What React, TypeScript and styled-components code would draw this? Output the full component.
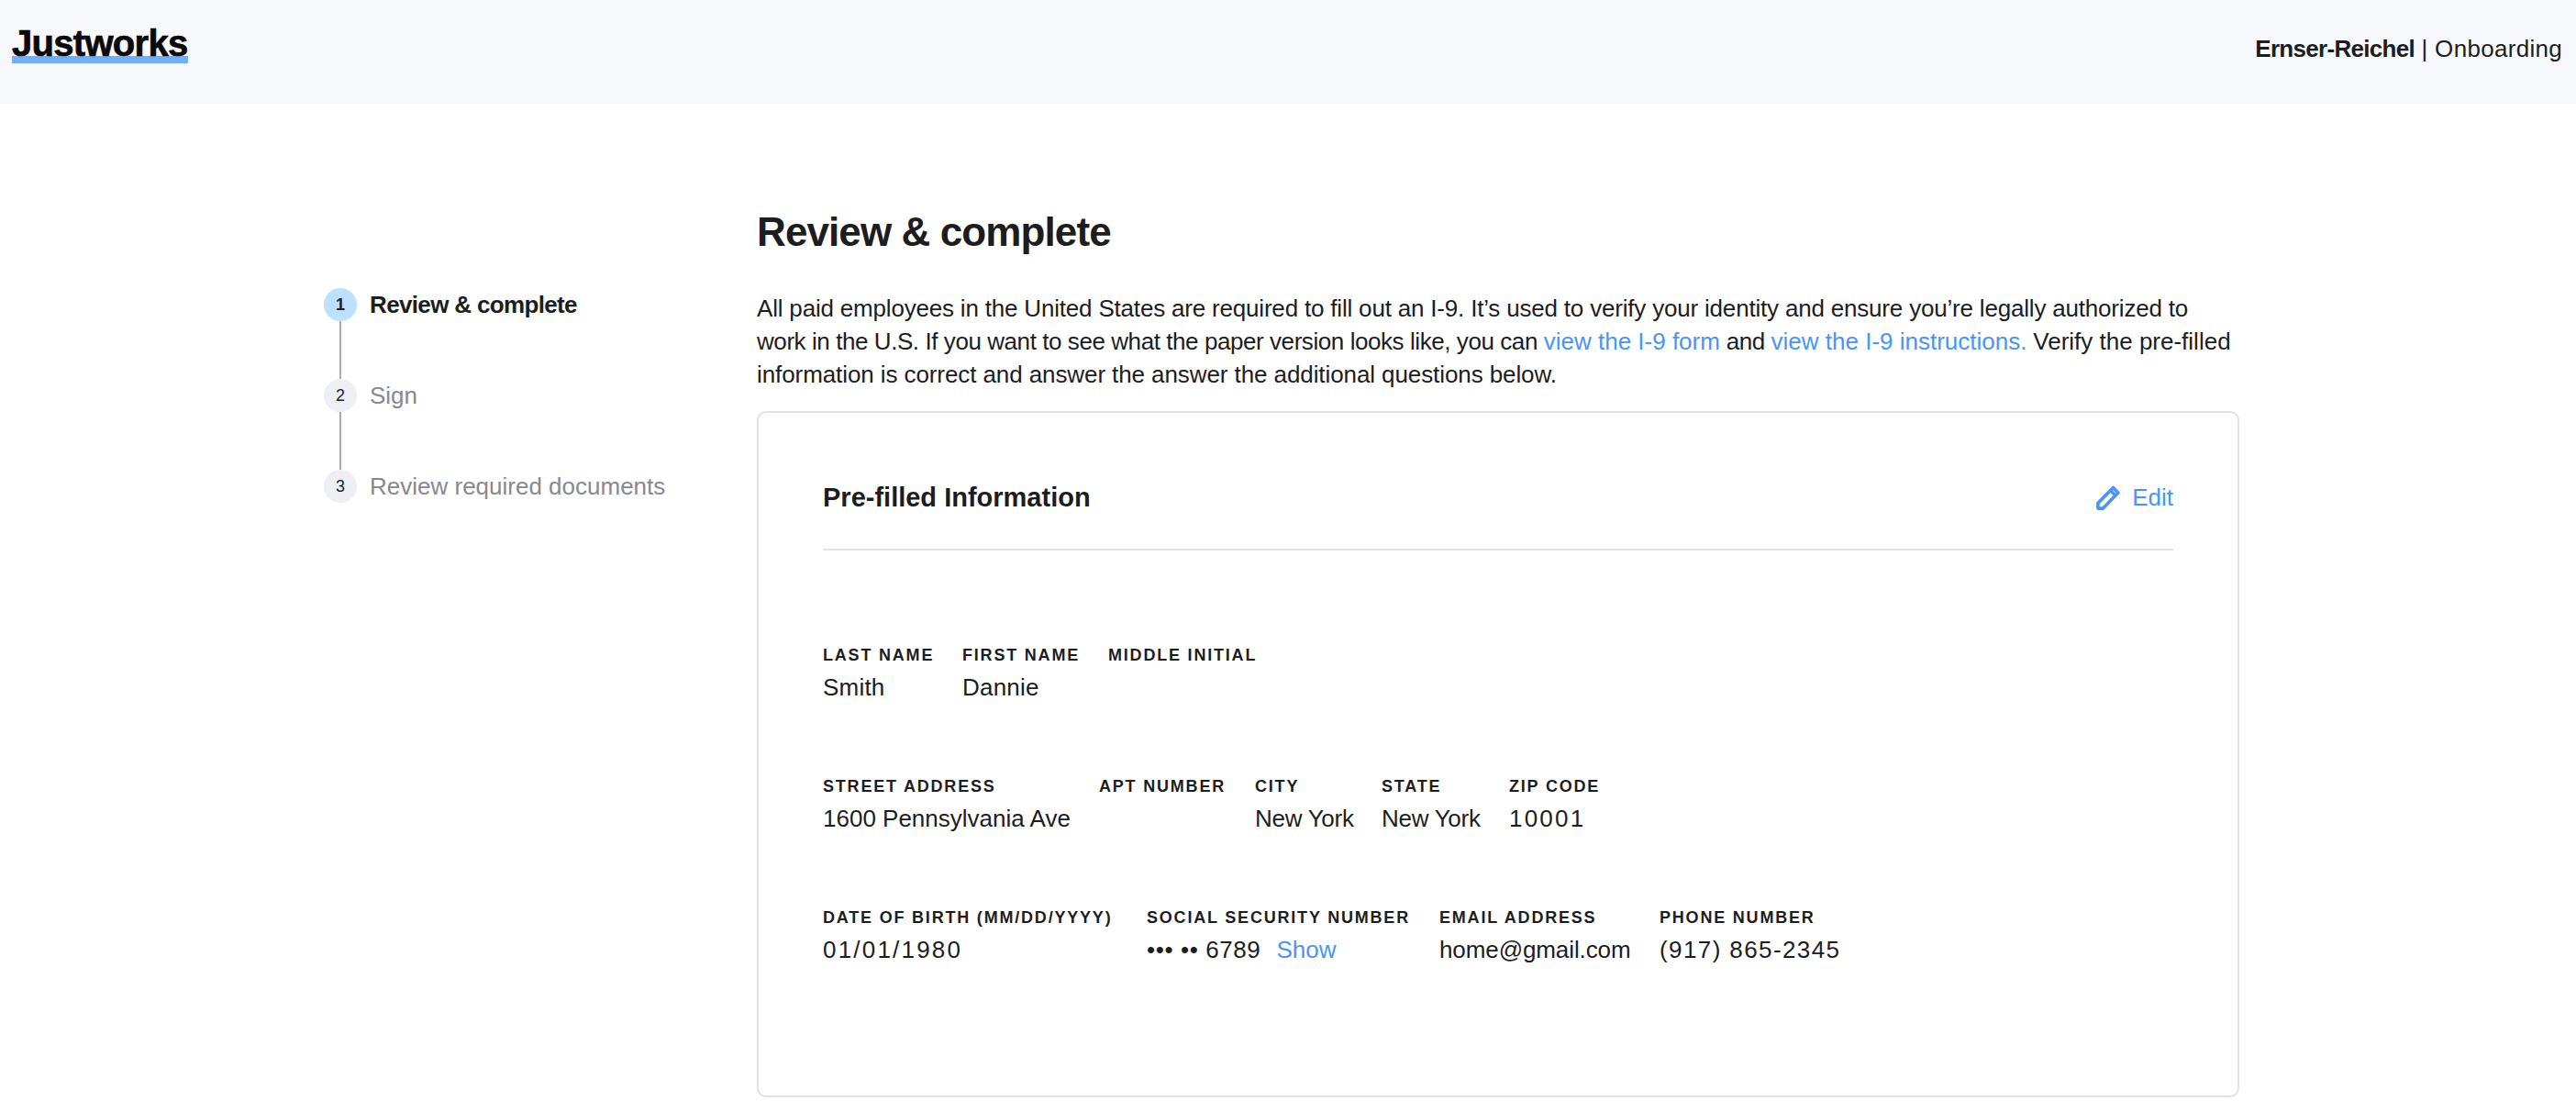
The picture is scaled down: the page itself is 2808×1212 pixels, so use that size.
import React from "react";
import { createGlobalStyle, styled } from "styled-components";

const GlobalStyle = createGlobalStyle`
  html, body {
    margin: 0;
    padding: 0;
    background: #fff;
    color: #1c1d1f;
    font-family: "Liberation Sans", Arial, sans-serif;
  }
`;

const Page = styled.div`
  width: 2808px;
  height: 1212px;
  overflow: hidden;
`;

const Header = styled.header`
  height: 113px;
  padding: 0 15px 6px 13px;
  box-sizing: border-box;
  background: #f7f8fc;
  display: flex;
  justify-content: space-between;
  align-items: center;
`;

const Logo = styled.div`
  height: 32px;
  margin-bottom: 9px;
  font-size: 40px;
  line-height: 36px;
  font-weight: 700;
  letter-spacing: -0.7px;
  color: #0a0a0a;
  -webkit-text-stroke: 0.7px #0a0a0a;
  border-bottom: 8px solid #6eb0ff;
`;

const Account = styled.div`
  font-size: 26px;
  letter-spacing: 0.3px;
  color: #1c1d1f;
`;

const Strong = styled.strong`
  font-weight: 700;
  letter-spacing: -0.7px;
`;

const Body = styled.div`
  display: flex;
  padding: 113px 0 0 353px;
`;

const Steps = styled.ol`
  list-style: none;
  margin: 88px 0 0;
  padding: 0;
  width: 472px;
`;

const Step = styled.li<{ $last?: boolean }>`
  display: flex;
  align-items: flex-start;
  gap: 14px;
  height: ${(p) => (p.$last ? "36px" : "99px")};
`;

const Marker = styled.div`
  display: flex;
  flex-direction: column;
  align-items: center;
  height: 100%;
`;

const Circle = styled.div<{ $active?: boolean }>`
  width: 36px;
  height: 36px;
  flex: none;
  border-radius: 50%;
  display: flex;
  justify-content: center;
  align-items: center;
  font-size: 18px;
  font-weight: ${(p) => (p.$active ? 700 : 400)};
  color: #1c1d1f;
  background: ${(p) => (p.$active ? "#bde0ff" : "#eeeff4")};
`;

const Connector = styled.div`
  flex: 1;
  width: 2px;
  background: #a9abb8;
`;

const StepLabel = styled.span<{ $active?: boolean }>`
  font-size: 26px;
  line-height: 36px;
  font-weight: ${(p) => (p.$active ? 700 : 400)};
  letter-spacing: ${(p) => (p.$active ? "-0.65px" : "0")};
  color: ${(p) => (p.$active ? "#1c1d1f" : "#868892")};
`;

const Main = styled.main`
  width: 1616px;
`;

const Title = styled.h1`
  margin: 0 0 38px;
  font-size: 44px;
  line-height: 54px;
  font-weight: 700;
  letter-spacing: -0.9px;
  color: #1c1d1f;
`;

const Intro = styled.div`
  margin: 0 0 22px;
  font-size: 26px;
  line-height: 36px;
  white-space: nowrap;
`;

const IntroLine = styled.p<{ $tracking: number }>`
  margin: 0;
  letter-spacing: ${(p) => p.$tracking}px;
`;

const IntroTail = styled.span`
  letter-spacing: 0;
`;

const TextLink = styled.a`
  color: #4a94f8;
  letter-spacing: 0;
  text-decoration: none;
`;

const Card = styled.section`
  box-sizing: border-box;
  height: 748px;
  padding: 0 70px;
  border: 2px solid #e2e2e6;
  border-radius: 10px;
`;

const CardHead = styled.div`
  box-sizing: border-box;
  height: 150px;
  padding-top: 37px;
  display: flex;
  justify-content: space-between;
  align-items: center;
  border-bottom: 2px solid #e2e2e6;
`;

const CardTitle = styled.h2`
  margin: 0;
  font-size: 29px;
  font-weight: 700;
`;

const EditLink = styled(TextLink)`
  display: flex;
  align-items: center;
  gap: 13px;
  font-size: 26px;
`;

const Rows = styled.div`
  padding-top: 100px;
  display: flex;
  flex-direction: column;
  gap: 71px;
`;

const Row = styled.div<{ $columns: string }>`
  display: grid;
  grid-template-columns: ${(p) => p.$columns};
`;

const Field = styled.div`
  height: 72px;
`;

const FieldLabel = styled.div`
  font-size: 18px;
  line-height: 28px;
  font-weight: 700;
  letter-spacing: 1.8px;
  text-transform: uppercase;
  white-space: nowrap;
  color: #1c1d1f;
`;

const FieldValue = styled.div<{ $tracking?: number }>`
  font-size: 26px;
  line-height: 42px;
  letter-spacing: ${(p) => p.$tracking ?? 0.2}px;
  white-space: nowrap;
`;

const ShowLink = styled(TextLink)`
  margin-left: 17px;
`;

const PencilIcon = () => (
  <svg width="26" height="27" viewBox="0 0 26 27" fill="none" stroke="#4a94f8" strokeWidth="3.6" strokeLinejoin="round">
    <path d="M1.9 25.1V19.5L18.5 2.4l5.4 5.6L7.5 25.1z" />
    <path d="M15.5 5.5l5.6 5.8" />
  </svg>
);

type FieldData = { label: string; value?: string; tracking?: number; masked?: boolean };

const rows: { columns: string; fields: FieldData[] }[] = [
  {
    columns: "152px 159px auto",
    fields: [
      { label: "Last name", value: "Smith" },
      { label: "First name", value: "Dannie" },
      { label: "Middle initial" },
    ],
  },
  {
    columns: "301px 170px 138px 139px auto",
    fields: [
      { label: "Street address", value: "1600 Pennsylvania Ave", tracking: 0 },
      { label: "Apt number" },
      { label: "City", value: "New York", tracking: -0.27 },
      { label: "State", value: "New York", tracking: -0.27 },
      { label: "Zip code", value: "10001", tracking: 2.2 },
    ],
  },
  {
    columns: "353px 319px 240px auto",
    fields: [
      { label: "Date of birth (mm/dd/yyyy)", value: "01/01/1980", tracking: 2.2 },
      { label: "Social security number", value: "••• •• 6789", tracking: 0.6, masked: true },
      { label: "Email address", value: "home@gmail.com", tracking: -0.1 },
      { label: "Phone number", value: "(917) 865-2345", tracking: 1.4 },
    ],
  },
];

const steps = ["Review & complete", "Sign", "Review required documents"];

export default function App() {
  return (
    <Page>
      <GlobalStyle />
      <Header>
        <Logo>Justworks</Logo>
        <Account>
          <Strong>Ernser-Reichel</Strong> | Onboarding
        </Account>
      </Header>
      <Body>
        <Steps>
          {steps.map((label, i) => (
            <Step key={label} $last={i === steps.length - 1}>
              <Marker>
                <Circle $active={i === 0}>{i + 1}</Circle>
                {i < steps.length - 1 && <Connector />}
              </Marker>
              <StepLabel $active={i === 0}>{label}</StepLabel>
            </Step>
          ))}
        </Steps>
        <Main>
          <Title>Review &amp; complete</Title>
          <Intro>
            <IntroLine $tracking={-0.19}>
              All paid employees in the United States are required to fill out an I-9. It’s used to verify your identity and ensure you’re legally authorized to
            </IntroLine>
            <IntroLine $tracking={-0.43}>
              work in the U.S. If you want to see what the paper version looks like, you can <TextLink href="#">view the I-9 form</TextLink> and <TextLink href="#">view the I-9 instructions.</TextLink> <IntroTail>Verify the pre-filled</IntroTail>
            </IntroLine>
            <IntroLine $tracking={-0.09}>
              information is correct and answer the answer the additional questions below.
            </IntroLine>
          </Intro>
          <Card>
            <CardHead>
              <CardTitle>Pre-filled Information</CardTitle>
              <EditLink href="#">
                <PencilIcon />
                Edit
              </EditLink>
            </CardHead>
            <Rows>
              {rows.map((row) => (
                <Row key={row.columns} $columns={row.columns}>
                  {row.fields.map((field) => (
                    <Field key={field.label}>
                      <FieldLabel>{field.label}</FieldLabel>
                      <FieldValue $tracking={field.tracking}>
                        {field.value}
                        {field.masked && <ShowLink href="#">Show</ShowLink>}
                      </FieldValue>
                    </Field>
                  ))}
                </Row>
              ))}
            </Rows>
          </Card>
        </Main>
      </Body>
    </Page>
  );
}
